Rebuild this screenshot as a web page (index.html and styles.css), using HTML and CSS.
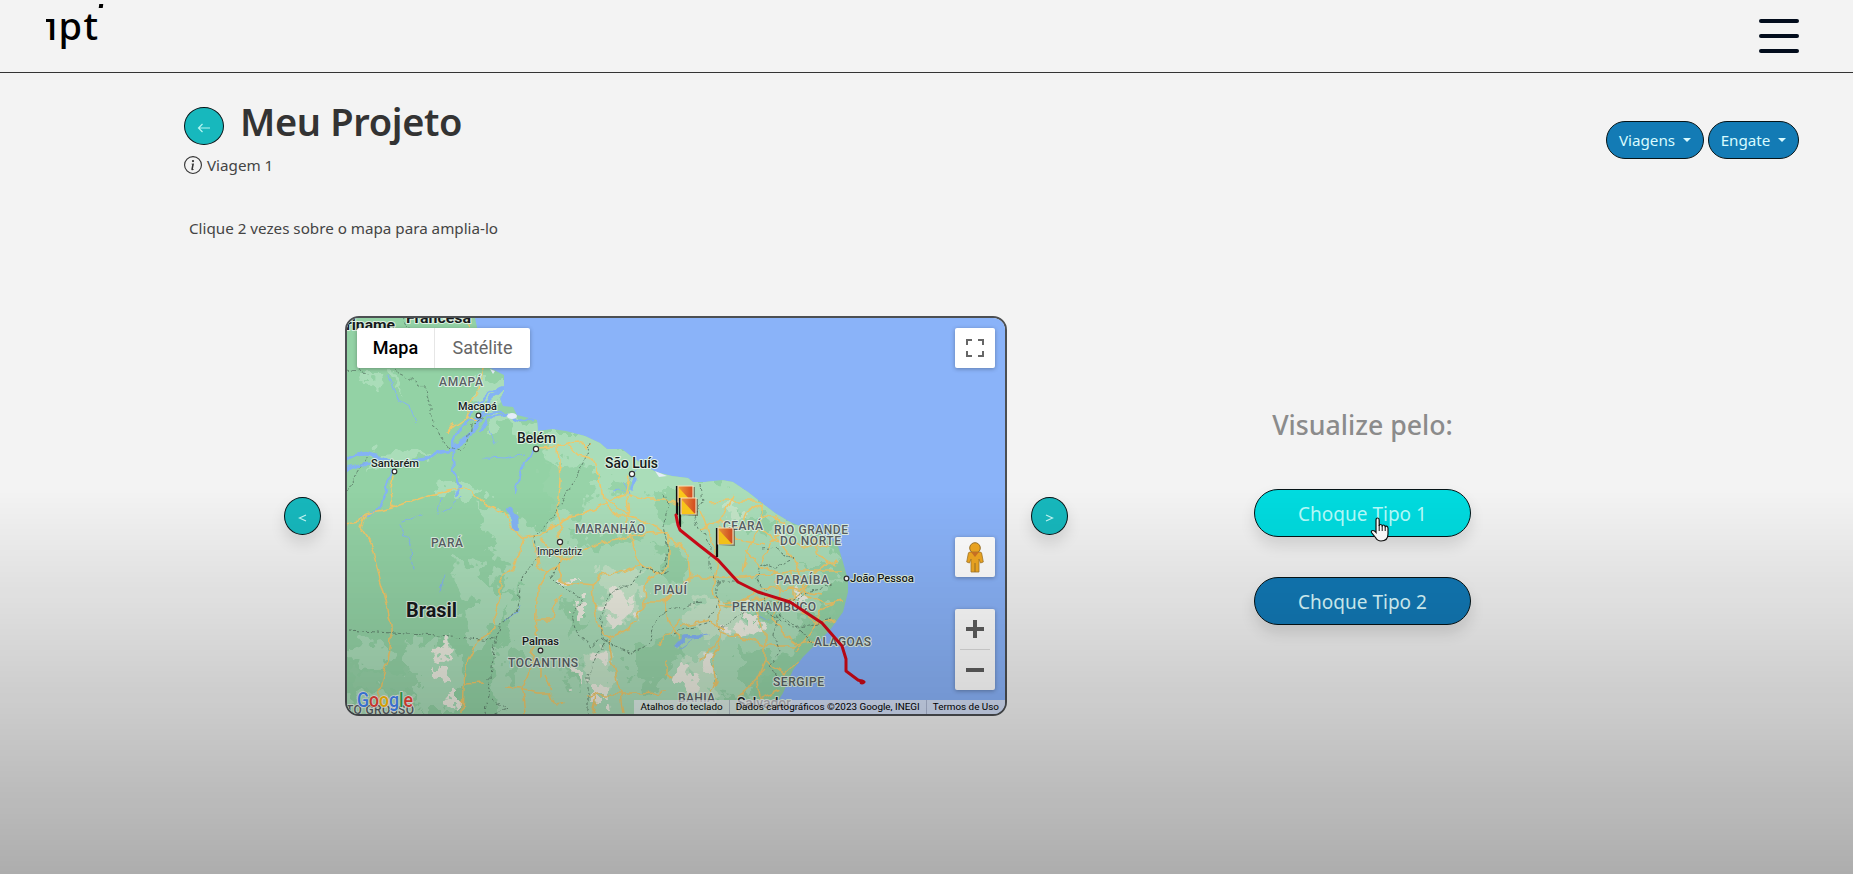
FILE: index.html
```html
<!DOCTYPE html>
<html lang="pt-BR">
<head>
<meta charset="utf-8">
<title>Meu Projeto</title>
<link rel="stylesheet" href="styles.css">
</head>
<body>
<header class="topbar">
  <div class="logo">ıpt</div>
  <button class="menu" aria-label="Menu"><i></i><i></i><i></i></button>
</header>
<main>
  <section class="heading">
    <div>
      <div class="title-row">
        <button class="circle back"><svg width="14" height="10" viewBox="0 0 14 10"><path d="M13 5H1.500M5.500 1 1.500 5l4 4" fill="none" stroke="#b5f5f2" stroke-width="1.200"/></svg></button>
        <h1>Meu Projeto</h1>
      </div>
      <div class="trip">
        <svg width="18" height="18" viewBox="0 0 16 16" fill="#333"><path d="M8 15A7 7 0 1 1 8 1a7 7 0 0 1 0 14m0 1A8 8 0 1 0 8 0a8 8 0 0 0 0 16"/><path d="m8.930 6.588-2.290.287-.082.380.450.083c.294.070.352.176.288.469l-.738 3.468c-.194.897.105 1.319.808 1.319.545 0 1.178-.252 1.465-.598l.088-.416c-.200.176-.492.246-.686.246-.275 0-.375-.193-.304-.533zM9 4.500a1 1 0 1 1-2 0 1 1 0 0 1 2 0"/></svg>
        <span>Viagem 1</span>
      </div>
    </div>
    <div class="filters">
      <button class="drop viagens">Viagens<b></b></button>
      <button class="drop engate">Engate<b></b></button>
    </div>
  </section>
  <p class="hint">Clique 2 vezes sobre o mapa para amplia-lo</p>
  <section class="stage">
    <button class="circle nav"><svg width="9" height="10" viewBox="0 0 9 10"><path d="M8 2 1.500 5 8 8" fill="none" stroke="#c4f7f5" stroke-width="1.200"/></svg></button>
    <div class="map">
      <svg class="tiles" width="658" height="396" viewBox="347 318 658 396">
        <defs>
          <filter id="rough" x="-5%" y="-5%" width="110%" height="110%" color-interpolation-filters="sRGB"><feTurbulence type="fractalNoise" baseFrequency=".07" numOctaves="3" seed="4"/><feDisplacementMap in="SourceGraphic" scale="34" xChannelSelector="R" yChannelSelector="G"/></filter>
          <filter id="wiggle" x="-5%" y="-5%" width="110%" height="110%" color-interpolation-filters="sRGB"><feTurbulence type="fractalNoise" baseFrequency=".09" numOctaves="2" seed="8"/><feDisplacementMap in="SourceGraphic" scale="9" xChannelSelector="R" yChannelSelector="G"/></filter>
          <clipPath id="landclip"><path d="M347 318H475L478 332 482 350 490 368 504 375 504 391 500 399 503 406 513 407 517 415 537 420 538 431 552 429 566 431 585 436 600 443 607 449 622 449 632 457 647 467 656 472 664 474 672 476 688 478 693 482 705 482 722 480 733 482 748 492 762 503 775 513 790 522 812 531 830 538 838 546 843 562 848 580 848 592 843 612 830 630 820 640 803 657 793 670 783 693 778 701 767 714H347Z"/></clipPath>
          <linearGradient id="flag"><stop stop-color="#ee9a3c"/><stop offset="1" stop-color="#d4491f"/></linearGradient>
          <g id="marker"><path d="M1 0V29" stroke="#111" stroke-width="2.200"/><path d="M2.500 1H19V18L3 17Z" fill="#5a4632" opacity=".6"/><path d="M2 0H17V16H2Z" fill="url(#flag)" stroke="#f6e3bb" stroke-width="1.200"/><path d="M3 2 16 16H3Z" fill="#fbc81b"/></g>
        </defs>
        <rect x="347" y="318" width="658" height="396" fill="#8ab3f9"/>
        <g clip-path="url(#landclip)">
          <rect x="347" y="318" width="658" height="396" fill="#93d2a5"/>
          <g filter="url(#rough)" fill="#aaddb9">
            <path d="M390 366l8 0 2 24-8-14zM476 372l28 6v18l-14 14-16-9 5-16zM490 412l48 12 0 14-20-4-25-8zM540 436l60 0 50 28 40 14 30 0 50 25 60 40 8 25-20 50-60 60-20 50H500l-10-45 20-70 30-50 20-60z"/>
            <path d="M362 374l16 0 2 22-10-8zM372 456l40-6 24 4-24 8-50 6zM430 488l26-10 22 12-10 8-30-2zM482 500l26 10 26 20 20 10-10 40-30 10-20-10 6-30-20-20zM450 555l30 10-4 12 30 14 8 22-24 8-15-20-26-26zM350 646l30-4 12 16-14 10-30-8zM405 640l45 6 15 18-14 50h-30l-10-30zM460 610l32 0-6 40-20 5zM347 702l40-10 30 10 0 20h-70z"/>
          </g>
          <g filter="url(#rough)" fill="#97d3a8">
            <path d="M545 465l40-5 10 30-25 25-24-14zM570 530l38 2 30-5 10 10-40 12-34-5zM610 474l26 6-8 16-18-4zM650 490l35 0 6 25-28 8zM655 544l24 4 12 30-20 5zM560 604l18-5 12 26-18 12zM630 650l46-18 6 22-30 36-22-10zM510 644l12 4-4 36-12 5zM567 659l14 7-5 20-12-6zM740 512l36 10-5 12-26-6zM720 597l35 12 25 0 0 12-46-4zM738 649l40 8 0 18-28 16-12-18zM800 562l28 0 10 8-26 8zM795 612l30 0 5 8-30 14zM690 664l26 0 0 16-26 6zM718 694l34 5 0 20h-34zM350 666l45 10 20 0 0 14-66 0z"/>
          </g>
          <g filter="url(#rough)" fill="#c3e4c7">
            <path d="M600 566l46 6-5 24-15 30-22-5zM580 656l18-8 16 8-4 40-22-8zM680 608l34-10 26 14 8 16-24 12-28-10zM684 654l28 0 4 40-30 14zM720 503l16-2 10 12-10 6z"/>
          </g>
          <g filter="url(#rough)" fill="#ecece0">
            <path d="M607 592l16-4 6 14-11 13-14-6zM625 600l9 2-4 12-12 17-12-4 12-9zM574 601l10-2 0 12-11 0zM441 644l8 4-3 12-9-4zM438 665l9 2-2 14-7-2zM447 690l12 4 0 14-11-3zM572 662l8 8 0 14-9-6zM592 684l14 2 2 16-16 0zM598 650l9 5-5 8-8-2zM729 628l24-10 10 6-2 6-16-3-8 10-10 2zM684 670l14 4-5 20-11-8zM708 656l8 2-5 17-7-4zM800 590l8 4-5 8-8-2zM562 580l10-1 0 5-9 1zM745 606l12 10-4 6-12-10z"/>
          </g>
          <g filter="url(#wiggle)" fill="none" stroke="#84b3f4" stroke-linejoin="round" stroke-linecap="round">
            <path stroke-width="4" d="M345 462q18-14 34-4t32 3q20-3 42-14l16-10 12-20 8-17 13-12"/>
            <path stroke-width="2.500" d="M345 470q20-8 38-4M452 444l10-20 20-9 18-3 20 8 14 0M470 434l12-16M480 430l8-12 16-2M465 418l20-22 15-8"/>
            <path stroke-width="2.200" d="M452 449l2 20 6 15-6 12M392 470l-6 20-10 20-14 8M535 450l-12 14-4 16-4 14"/>
            <path stroke-width="6" d="M509 510l6 8 1 9"/>
            <path stroke-width="1" d="M388 376l10 24 12 7 6 15M485 457l20 1 20-4M490 430l5 12M442 498l-4 18M400 524l10 20 4 26M445 575l-4 18M402 522l20-8M443 512l16-14M628 492l-4-10M630 478l8-10M505 620l15-12M625 490l-12 2M680 648l15-10 14-2M758 616l10 3"/>
            <path stroke-width="3.500" d="M677 645l8-8 16-1M635 478l-4 10"/>
          </g>
          <g filter="url(#wiggle)" fill="none" stroke="#f0c76a" stroke-width="1.500" stroke-linejoin="round">
            <path d="M460 318l10 9M483 370l-4 18-9 17-5 13-12 8-6 8M464 416l12 4M394 472l-3 18 2 18M345 524l15-2 6-9 27-5 37-13 20-5 14-3 11 8 15 12 15 8 7 12 12 11 16-3 20-13 12-7M367 514l-6 14 9 14 7 26 9 32 5 25 0 15-3 20-8 25-4 30"/>
            <path d="M536 447l21-1 21-5 8 8 5-6M558 446l2 34-2 35 2 33 0 35M568 445l10 10 14 3 8 22 3 17 15 11 10 4M560 520l20-5 20-10 25-10 4-20M628 493l22 7 22 0 8 4M603 500l12 15 15 0-2-20M628 510l0 15 9 33 6 10"/>
            <path d="M524 537l-4 13-5 15-15 15 0 20-7 15 2 15-17 10-13 25-2 50M533 540l5 25 10 7 12-7M548 572l-8 13-3 25-1 30-6 30-8 20 3 24M560 563l1 20 32 3 2 24 2 15 11 13 4 22 6 20 5 34M593 586l7-11 25-3 15-7 20 7 8-4 0-33-8-5-32-15M560 560l40-17 40-8 28-3M540 538l20 22M608 638l22-10 15-23-1-17 6-10 12-7M645 602l19 0 4 18 12 18M664 602l14-15M680 620l-22 24M536 620l16 0 3-20 7-5M465 684l20-1M505 687l15 1 17 4 13 0 5 13 10-2M545 675l7 15M585 697l15-3 40 0 25-2M597 695l-4 20M540 680l0-20M667 660l0 15 5 3"/>
            <path d="M668 535l20 20 2 22 25 0 30 0 45-6 50 0M690 577l-20 20M700 510l8 20 10 30-4 30 5 20 0 30-20 20M708 502l20-1 35 0 0 12-6 20-10 20-4 20M763 503l-17 10-4 14M764 515l22 8M720 520l20 8 16-3 20 15 28 6 24-1M775 516l3 24 22 30 5 24 20 10 18-3M745 550l14 15 18 8 3 24-8 20 12 18 16 12M838 560l-18 8-14 20-18 12-30-2-25 9-17-2M722 603l20-2 20-12 30-1 30 6M725 630l-16-10-30 7M720 632l30 8 18 6 25 0 25-6M755 610l10 22 0 30-8 20 4 30M765 660l20 14 14-12M757 700l22-10M720 640l-8 20 4 20-12 34M735 712l10-22 20-20M790 525l-20 18-10 20M815 535l0 18 20 12M840 600l-20 10-8 22-16 20M793 570l0 35 25 18 20-2M700 530l20-10 15-25M765 545l-30-6-16-14"/>
          </g>
          <g filter="url(#wiggle)" fill="none" stroke="#5d7e6a" stroke-width=".9" stroke-dasharray="3 2">
            <path d="M392 370l18 8 15 10 6 14 0 16 8 12 6 14 15 6 8-8 3-16 14-10M347 370l20 4M403 318l5 10M347 490l10-18 10-15M347 630l150 10M590 443l-5 20-15 25-15 28-20 18 2 25-14 15-4 20-2 15-16 15-8 25-3 30-4 34M560 562l-8 15 12 12 18 8-10 18 6 20 14 12 8-10 12 8 18 8 20-8 8-30 20-8 24-4M668 572l-26-4-10 16-23 8-8 28 2 28M600 650l-12 24 0 40M665 495l4 10-6 20 4 20-2 24M700 483l2 20-8 14 16 30 0 20 8 15 20 0M760 550l15-2 18 12-18 8-14-5-4 16 10 15-6 10 26-2 14-10M718 582l0 16-10 24-38 12M718 630l25-18 20-4 30 20 40-8M780 614l28 24 10 14M778 615l-4 22 6 14-10 15 8 16M790 605l20-15 24-4M493 700l14 10-15 4"/>
          </g>
        </g>
        <g fill="#e4edf7"><ellipse cx="512" cy="416" rx="5" ry="3"/><path d="M490 369l5 2-2 3zM655 471l12 5-8 1z"/></g>
        <g class="labels state">
          <text x="439" y="386" textLength="44">AMAPÁ</text><text x="431" y="547" textLength="32">PARÁ</text><text x="575" y="533" textLength="70">MARANHÃO</text><text x="654" y="594" textLength="33">PIAUÍ</text><text x="508" y="667" textLength="70">TOCANTINS</text><text x="723" y="530" textLength="40">CEARÁ</text><text x="774" y="534" textLength="74">RIO GRANDE</text><text x="780" y="545" textLength="61">DO NORTE</text><text x="776" y="584" textLength="53">PARAÍBA</text><text x="732" y="611" textLength="84">PERNAMBUCO</text><text x="814" y="646" textLength="57">ALAGOAS</text><text x="773" y="686" textLength="51">SERGIPE</text><text x="678" y="702" textLength="37">BAHIA</text><text x="346" y="714" textLength="68">TO GROSSO</text>
        </g>
        <g class="labels city">
          <text x="458" y="410" font-size="11.500" textLength="39" lengthAdjust="spacingAndGlyphs">Macapá</text><text x="517" y="443" font-size="14" textLength="39" lengthAdjust="spacingAndGlyphs">Belém</text><text x="371" y="467" font-size="11.500" textLength="48" lengthAdjust="spacingAndGlyphs">Santarém</text><text x="605" y="468" font-size="14" textLength="53" lengthAdjust="spacingAndGlyphs">São Luís</text><text x="537" y="555" font-size="11" font-weight="400" textLength="45" lengthAdjust="spacingAndGlyphs">Imperatriz</text><text x="522" y="645" font-size="11.500" textLength="37" lengthAdjust="spacingAndGlyphs">Palmas</text><text x="850" y="582" font-size="11.500" textLength="64">João Pessoa</text><text x="737" y="708" font-size="14" textLength="54">Salvador</text>
          <text x="406" y="617" font-size="20" font-weight="700" textLength="51" lengthAdjust="spacingAndGlyphs">Brasil</text><text x="346" y="330" font-size="15" font-weight="700" textLength="49" lengthAdjust="spacingAndGlyphs">riname</text><text x="406" y="323" font-size="15" font-weight="700" textLength="65" lengthAdjust="spacingAndGlyphs">Francesa</text>
        </g>
        <g fill="#fff" stroke="#333" stroke-width="1.200"><circle cx="478.500" cy="415.500" r="2.300"/><circle cx="536" cy="449" r="2.600"/><circle cx="394.500" cy="471.500" r="2.300"/><circle cx="632" cy="474" r="2.600"/><circle cx="560" cy="542" r="2.600"/><circle cx="540.500" cy="650.500" r="2.300"/><circle cx="846.500" cy="578.500" r="2.300"/></g>
        <use href="#marker" x="676" y="486"/><use href="#marker" x="679" y="498"/>
        <path d="M676 515l2 10 2 5 20 16 18 14 20 22 20 10 32 10 32 21 20 23 4 13 0 12 12 9 6 2" fill="none" stroke="#cf0a18" stroke-width="3" stroke-linejoin="round" stroke-linecap="round"/><circle cx="862" cy="682" r="2.500" fill="#c90a18"/>
        <use href="#marker" x="716" y="528"/>
        <text class="google" x="357" y="707" textLength="56" lengthAdjust="spacingAndGlyphs"><tspan fill="#4285f4">G</tspan><tspan fill="#ea4335">o</tspan><tspan fill="#fbbc05">o</tspan><tspan fill="#4285f4">g</tspan><tspan fill="#34a853">l</tspan><tspan fill="#ea4335">e</tspan></text>
      </svg>
      <div class="types"><span class="on">Mapa</span><span>Satélite</span></div>
      <div class="ctl full"><svg width="18" height="18" fill="none" stroke="#666" stroke-width="2"><path d="M1 6V1H6M12 1H17V6M17 12V17H12M6 17H1V12"/></svg></div>
      <div class="ctl man"><svg width="18" height="31" viewBox="0 0 18 31"><circle cx="9" cy="6" r="5.300" fill="#f3aa22" stroke="#9e7428"/><path d="M4 10H14Q16 10 16 13L17.300 20 14.500 21 13 17V30H5V17L3.500 21 .700 20 2 13Q2 10 4 10Z" fill="#f3aa22" stroke="#a77b2c" stroke-width=".8"/><path d="M5 10H13L9 15Z" fill="#cf7625"/><path d="M9 21V30" stroke="#9e7428"/></svg></div>
      <div class="ctl zoom"><svg width="40" height="81" viewBox="0 0 40 81"><path d="M20 11V29M11 20H29M11 61H29" stroke="#5e5e5e" stroke-width="4"/><path d="M5 40.500H35" stroke="#dedede"/></svg></div>
      <div class="legal"><span>Atalhos do teclado</span><span>Dados cartográficos ©2023 Google, INEGI</span><span>Termos de Uso</span></div>
    </div>
    <button class="circle nav"><svg width="9" height="10" viewBox="0 0 9 10"><path d="M1 2 7.500 5 1 8" fill="none" stroke="#c4f7f5" stroke-width="1.200"/></svg></button>
    <div class="choices">
      <h2>Visualize pelo:</h2>
      <button class="pill hover">Choque Tipo 1
        <svg class="cursor" width="20" height="26" viewBox="0 0 20 26"><path d="M6 15V3Q6 1 7.600 1T9.200 3V9Q9.200 7.500 10.700 7.500T12.200 9.500Q12.300 8 13.700 8T15.200 10.200Q15.500 9 16.600 9.200T18 11V17Q18 24 11 24 7.500 24 5.500 20.500L1.500 15.500Q.800 13.500 3 13.500 4.500 13.500 6 15.500Z" fill="#fff" stroke="#111" stroke-width="1.200"/><path d="M9.200 8V14M12.200 9V14M15.200 10V14" stroke="#111" stroke-width="1"/></svg>
      </button>
      <button class="pill">Choque Tipo 2</button>
    </div>
  </section>
</main>
</body>
</html>
```
FILE: styles.css
```css
* { box-sizing: border-box; }
body { margin: 0; height: 874px; overflow: hidden; background: #f3f3f3; color: #333; font-family: "Noto Sans", sans-serif; font-size: 16px; }
body::after { content: ""; position: fixed; inset: 490px 0 0; background: linear-gradient(rgba(0,0,0,0), rgba(0,0,0,.288)); pointer-events: none; z-index: 9; }
button { font-family: inherit; margin: 0; padding: 0; }
h1, h2, p { margin: 0; }
.topbar { height: 73px; border-bottom: 1px solid #333; display: flex; justify-content: space-between; padding: 0 54px 0 45px; }
.logo { position: relative; color: #000; font-size: 38px; line-height: 50px; font-weight: 500; letter-spacing: 1.3px; padding-left: 2px; height: 54px; }
.logo::before { content: ""; position: absolute; left: 1px; top: 19px; width: 6px; height: 3px; background: #000; }
.logo::after { content: ""; position: absolute; left: 54px; top: 4px; width: 4px; height: 4px; background: #000; transform: skewX(-8deg); }
.menu { margin-top: 19px; width: 40px; height: 34px; border: 0; background: none; display: flex; flex-direction: column; justify-content: space-between; }
.menu i { height: 4px; width: 40px; border-radius: 2px; background: #020c1c; }
.heading { display: flex; justify-content: space-between; padding: 34px 54px 0 184px; }
.title-row { display: flex; align-items: flex-start; gap: 16px; height: 48px; }
.circle { flex: none; display: flex; align-items: center; justify-content: center; border: 1px solid #061417; border-radius: 50%; background: #17b8bd; }
.back { width: 40px; height: 38px; }
.back svg { margin-top: 3px; }
h1 { font-size: 38px; line-height: 28px; font-weight: 600; letter-spacing: -.35px; }
.trip { display: flex; align-items: center; height: 20px; gap: 5px; }
.trip span, .hint { font-weight: 400; font-size: 15.2px; line-height: 18px; color: #444; }
.trip span { padding-bottom: 1px; }
.filters { display: flex; gap: 4px; padding-top: 14px; }
.drop { height: 38px; border: 1px solid #061417; border-radius: 19px; background: #137bb5; color: #d9fbff; font-size: 15.2px; display: flex; align-items: center; justify-content: center; gap: 8px; }
.drop b { border: 4px solid transparent; border-top-color: #d9fbff; border-bottom: 0; }
.viagens { width: 98px; }
.engate { width: 91px; }
.hint { padding: 44px 0 0 189px; height: 141px; }
.stage { display: flex; align-items: flex-start; padding-left: 284px; }
.nav { width: 37px; height: 38px; margin-top: 181px; box-shadow: 0 8px 15px rgba(0,0,0,.12); }
.nav svg { margin-top: 3px; }
.map { position: relative; flex: none; width: 662px; height: 400px; margin: 0 24px; border: 2px solid #4c4f52; border-radius: 14px; overflow: hidden; }
.tiles { display: block; font-family: Roboto, sans-serif; }
.labels { paint-order: stroke; stroke: #dff1e3; stroke-width: 2px; stroke-linejoin: round; }
.state { font-size: 12px; font-weight: 500; fill: #586064; }
.city { fill: #171b1d; font-weight: 500; }
.google { font-size: 20px; font-weight: 500; paint-order: stroke; stroke: #f4f4f4; stroke-width: 1.5px; }
.types { position: absolute; left: 10px; top: 10px; display: flex; width: 173px; height: 40px; background: #fff; border-radius: 2px; box-shadow: 0 1px 4px rgba(0,0,0,.3); font: 18px/40px Roboto, sans-serif; color: #666; }
.types span { flex: 1; text-align: center; }
.types .on { flex: 0 0 78px; color: #000; font-weight: 500; border-right: 1px solid #e6e6e6; }
.ctl { position: absolute; right: 10px; width: 40px; height: 40px; background: #fff; border-radius: 2px; box-shadow: 0 1px 4px rgba(0,0,0,.3); display: flex; align-items: center; justify-content: center; }
.full { top: 10px; }
.man { top: 219px; }
.zoom { top: 291px; height: 81px; }
.legal { position: absolute; right: 0; bottom: 0; height: 14px; display: flex; background: rgba(240,240,245,.72); color: #000; font: 9.9px/14px Roboto, sans-serif; white-space: nowrap; }
.legal span { padding: 0 6px; }
.legal span + span { border-left: 1px solid rgba(100,110,140,.35); }
.choices { margin-left: 186px; width: 217px; padding-top: 89px; display: flex; flex-direction: column; align-items: center; }
h2 { font-size: 26.7px; line-height: 40px; font-weight: 500; color: #8b8b8b; white-space: nowrap; margin-bottom: 44px; }
.pill { position: relative; width: 217px; height: 48px; border: 1px solid #061417; border-radius: 24px; background: #1279b6; color: #d9fbff; font-size: 19px; padding-top: 2px; margin-bottom: 40px; box-shadow: 0 8px 15px rgba(0,0,0,.12); }
.hover { background: #00dbdf; color: #b5fbfb; }
.cursor { position: absolute; left: 115px; top: 27px; }
```
